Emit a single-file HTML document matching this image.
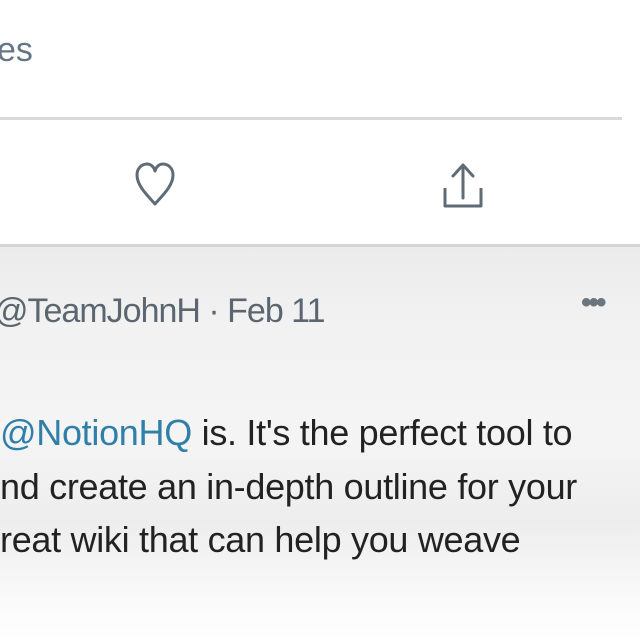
<!DOCTYPE html>
<html><head><meta charset="utf-8"><style>
html,body{margin:0;padding:0;}
body{width:640px;height:640px;overflow:hidden;position:relative;background:#fff;font-family:"Liberation Sans",Arial,sans-serif;}
.abs{position:absolute;white-space:nowrap;}
</style></head><body>
<div class="abs" style="left:-3px;top:31px;font-size:34px;color:#657786;">es</div>
<div class="abs" style="left:0;top:117px;width:622px;height:3px;background:#d6dadd;"></div>
<svg class="abs" style="left:130px;top:158px" width="50" height="50" viewBox="0 0 50 50">
<path d="M25 46 C18 38 7 28 7 17 C7 10 12 6 17 6 C21 6 24 9 25 13 C26 9 29 6 33 6 C38 6 43 10 43 17 C43 28 32 38 25 46 Z" fill="none" stroke="#5f6b75" stroke-width="3" stroke-linejoin="round"/>
</svg>
<svg class="abs" style="left:438px;top:158px" width="50" height="52" viewBox="0 0 50 52">
<path d="M25 40 V8 M15 18 L25 7 L35 18" fill="none" stroke="#5f6b75" stroke-width="3" stroke-linecap="round" stroke-linejoin="round"/>
<path d="M7 30 V48 H43 V30" fill="none" stroke="#5f6b75" stroke-width="3" stroke-linejoin="round"/>
</svg>
<div class="abs" style="left:0;top:244px;width:640px;height:3px;background:#d2d5d8;"></div>
<div class="abs" style="left:0;top:247px;width:640px;height:393px;background:linear-gradient(180deg,#ebebeb 0%,#f2f2f2 20%,#f4f4f4 50%,#ededed 70%,#f7f7f7 85%,#fff 100%);"></div>
<div class="abs" style="left:-6px;top:292px;font-size:34px;color:#5b6670;letter-spacing:-1px;">@TeamJohnH · Feb 11</div>
<div class="abs" style="left:581px;top:286px;font-size:30px;color:#6b757d;font-weight:bold;letter-spacing:-3px;">•••</div>
<div class="abs" style="left:0;top:412px;font-size:36px;color:#222;letter-spacing:-0.3px;"><span style="color:#2f7fa8">@NotionHQ</span> is. It's the perfect tool to</div>
<div class="abs" style="left:0;top:466px;font-size:36px;color:#222;letter-spacing:-0.3px;">nd create an in-depth outline for your</div>
<div class="abs" style="left:0;top:519px;font-size:36px;color:#222;letter-spacing:-0.3px;">reat wiki that can help you weave</div>
</body></html>
